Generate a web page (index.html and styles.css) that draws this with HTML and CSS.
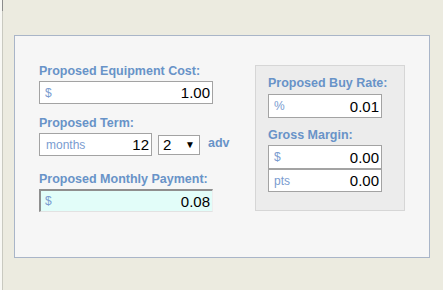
FILE: index.html
```html
<!DOCTYPE html>
<html lang="en">
<head>
    <meta charset="UTF-8">
    <meta name="viewport" content="width=device-width, initial-scale=1.0">
    <title>Proposed Payment</title>
    <link rel="stylesheet" href="styles.css">
</head>
<body>
    <div class="frame">
        <div class="panel">
            <div class="left-col">
                <div class="field">
                    <div class="label">Proposed Equipment Cost:</div>
                    <div class="box"><span class="prefix">$</span><span class="value">1.00</span></div>
                </div>
                <div class="field term">
                    <div class="label">Proposed Term:</div>
                    <div class="term-row">
                        <div class="box box-term"><span class="prefix">months</span><span class="value">12</span></div>
                        <div class="select"><span class="value">2</span><span class="arrow">&#9660;</span></div>
                        <span class="adv">adv</span>
                    </div>
                </div>
                <div class="field payment">
                    <div class="label">Proposed Monthly Payment:</div>
                    <div class="box box-payment"><span class="prefix">$</span><span class="value">0.08</span></div>
                </div>
            </div>
            <div class="side-box">
                <div class="label">Proposed Buy Rate:</div>
                <div class="box box-side"><span class="prefix">%</span><span class="value">0.01</span></div>
                <div class="label label-gross">Gross Margin:</div>
                <div class="box box-side"><span class="prefix">$</span><span class="value">0.00</span></div>
                <div class="box box-side box-pts"><span class="prefix">pts</span><span class="value">0.00</span></div>
            </div>
        </div>
    </div>
</body>
</html>
```

FILE: styles.css
```css
html, body {
    margin: 0;
    height: 100%;
}
body {
    background: #ecebe0;
    border-left: 2px solid #f8f8f4;
    font-family: "Liberation Sans", Arial, sans-serif;
    position: relative;
}
body::before {
    content: "";
    position: absolute;
    left: -2px;
    top: 0;
    width: 3px;
    height: 11px;
    background: #8c8c8c;
}
.frame {
    height: 100%;
    border-left: 1px solid #c9c9c0;
    padding-top: 35px;
    box-sizing: border-box;
}
.panel {
    margin-left: 11px;
    width: 416px;
    height: 223px;
    box-sizing: border-box;
    border: 1px solid #a9b5c8;
    background: #f6f6f6;
    display: flex;
    align-items: flex-start;
    padding: 27px 0 0 24px;
}
.left-col {
    width: 174px;
    flex-shrink: 0;
}
.label {
    color: #6893c8;
    font-weight: bold;
    font-size: 12.5px;
    line-height: 17px;
    margin-bottom: 1px;
    white-space: nowrap;
}
.field.term {
    margin-top: 11px;
}
.field.payment {
    margin-top: 15px;
}
.box {
    display: flex;
    justify-content: space-between;
    align-items: center;
    height: 23px;
    box-sizing: border-box;
    border: 1px solid #a3a3a3;
    background: #fff;
    padding: 0 2px 0 5px;
}
.prefix {
    color: #7a9cd0;
    font-size: 12px;
}
.value {
    color: #000;
    font-size: 15px;
}
.term-row {
    display: flex;
    align-items: center;
    width: 200px;
}
.box-term {
    width: 113px;
    flex-shrink: 0;
    padding-left: 6px;
}
.select {
    margin-left: 6px;
    width: 42px;
    flex-shrink: 0;
    height: 20px;
    box-sizing: border-box;
    border: 1px solid #a3a3a3;
    background: #fff;
    display: flex;
    justify-content: space-between;
    align-items: center;
    padding: 0 4px 0 4px;
}
.arrow {
    font-size: 10px;
    color: #000;
}
.adv {
    margin-left: 8px;
    color: #6893c8;
    font-weight: bold;
    font-size: 12.5px;
    align-self: flex-start;
    margin-top: 3px;
}
.box-payment {
    background: #e2fdf9;
    border-top: 2px solid #8f8f8f;
    border-left: 2px solid #8f8f8f;
    border-bottom: 1px solid #e2e2e2;
    border-right: 1px solid #eeeeee;
    padding-left: 4px;
}
.side-box {
    margin-left: 42px;
    margin-top: 2px;
    width: 150px;
    flex-shrink: 0;
    box-sizing: border-box;
    border: 1px solid #d6d6d6;
    background: #ececec;
    padding: 9px 0 18px 12px;
}
.side-box .label {
    margin-bottom: 2px;
}
.side-box .label-gross {
    margin-top: 9px;
    margin-bottom: 1px;
}
.box-side {
    width: 114px;
    height: 24px;
}
.box-pts {
    height: 23px;
}
```
